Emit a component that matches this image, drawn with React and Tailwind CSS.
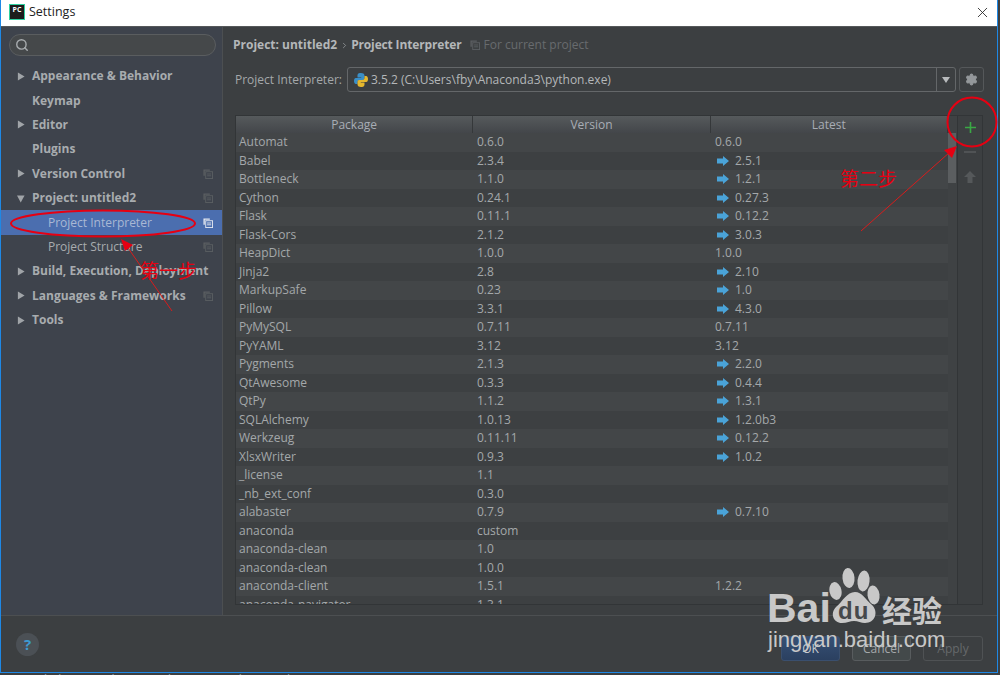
import { ChevronRight, Search, Settings, X } from 'lucide-react';

const sidebarItems = [
  { label: 'Appearance & Behavior', arrow: 'right' },
  { label: 'Keymap' },
  { label: 'Editor', arrow: 'right' },
  { label: 'Plugins' },
  { label: 'Version Control', arrow: 'right', copy: true },
  { label: 'Project: untitled2', arrow: 'down', copy: true },
  { label: 'Project Interpreter', child: true, selected: true, copy: true },
  { label: 'Project Structure', child: true, copy: true },
  { label: 'Build, Execution, Deployment', arrow: 'right' },
  { label: 'Languages & Frameworks', arrow: 'right', copy: true },
  { label: 'Tools', arrow: 'right' },
];

const packages = [
  ['Automat', '0.6.0', '0.6.0', false],
  ['Babel', '2.3.4', '2.5.1', true],
  ['Bottleneck', '1.1.0', '1.2.1', true],
  ['Cython', '0.24.1', '0.27.3', true],
  ['Flask', '0.11.1', '0.12.2', true],
  ['Flask-Cors', '2.1.2', '3.0.3', true],
  ['HeapDict', '1.0.0', '1.0.0', false],
  ['Jinja2', '2.8', '2.10', true],
  ['MarkupSafe', '0.23', '1.0', true],
  ['Pillow', '3.3.1', '4.3.0', true],
  ['PyMySQL', '0.7.11', '0.7.11', false],
  ['PyYAML', '3.12', '3.12', false],
  ['Pygments', '2.1.3', '2.2.0', true],
  ['QtAwesome', '0.3.3', '0.4.4', true],
  ['QtPy', '1.1.2', '1.3.1', true],
  ['SQLAlchemy', '1.0.13', '1.2.0b3', true],
  ['Werkzeug', '0.11.11', '0.12.2', true],
  ['XlsxWriter', '0.9.3', '1.0.2', true],
  ['_license', '1.1', '', false],
  ['_nb_ext_conf', '0.3.0', '', false],
  ['alabaster', '0.7.9', '0.7.10', true],
  ['anaconda', 'custom', '', false],
  ['anaconda-clean', '1.0', '', false],
  ['anaconda-clean', '1.0.0', '', false],
  ['anaconda-client', '1.5.1', '1.2.2', false],
  ['anaconda-navigator', '1.3.1', '', false],
];

const CopyIcon = ({ bright }) => (
  <svg width="10" height="10" viewBox="0 0 11 11" className={bright ? 'text-[#e4e8f0]' : 'text-[#5b5f62]'}>
    <path d="M0.5 0.5H7.5V2H2V7.5H0.5Z" fill="currentColor" />
    <rect x="3" y="3" width="7.5" height="7.5" fill="none" stroke="currentColor" />
    <path d="M4.5 5.5H9M4.5 7.5H9" stroke="currentColor" />
  </svg>
);

const Arrow = ({ dir }) => (
  <svg width="8" height="9" viewBox="0 0 9 9" className="text-[#a0a4a8]">
    {dir === 'down' ? <path d="M0 1H8.5L4.2 9Z" fill="currentColor" /> : <path d="M1 0L8.5 4.5L1 9Z" fill="currentColor" />}
  </svg>
);

const SidebarRow = ({ item }) => (
  <div className={`flex h-[24.4px] items-center ${item.selected ? 'bg-[#4b6eaf]' : ''}`}>
    <div className="flex w-[31px] shrink-0 justify-center pl-[13px] pr-[5px]">
      {item.arrow && <Arrow dir={item.arrow} />}
    </div>
    <span className={`flex-1 whitespace-nowrap text-[12px] ${item.child ? 'pl-[16px] font-normal' : 'font-bold'} ${item.selected ? 'text-[#a9b8d4]' : 'text-[#a8acaf]'}`}>
      {item.label}
    </span>
    <div className="flex w-[19px] shrink-0">
      {item.copy && <CopyIcon bright={item.selected} />}
    </div>
  </div>
);

const Annotations = () => (
  <svg className="absolute left-0 top-0" width="1000" height="675" viewBox="0 0 1000 675" fill="none">
    <ellipse cx="103" cy="223.5" rx="92" ry="13" stroke="#e60012" strokeWidth="2" />
    <circle cx="972" cy="122" r="24.5" stroke="#e60012" strokeWidth="2" />
    <path d="M172 311L126 245" stroke="#d81c1c" />
    <path d="M121 239L133 245L125 251Z" fill="#e60012" />
    <path d="M861 231L950 152" stroke="#d81c1c" />
    <path d="M957 146L952 158L944 150Z" fill="#e60012" />
  </svg>
);

const BaiduMark = () => (
  <div className="absolute left-[766px] top-[567px] h-[88px] w-[190px] text-[#c8c8c8]">
    <span className="absolute left-[1px] top-[11px] text-[41px] font-bold leading-[60px] [font-family:'Liberation_Sans',sans-serif]">Bai</span>
    <svg className="absolute left-[63px] top-0" width="52" height="58" viewBox="0 0 52 58" fill="currentColor">
      <ellipse cx="6.5" cy="24" rx="6" ry="9" transform="rotate(-12 6.5 24)" />
      <ellipse cx="19.5" cy="11" rx="6" ry="10" transform="rotate(-6 19.5 11)" />
      <ellipse cx="34.5" cy="14" rx="6" ry="10.5" transform="rotate(6 34.5 14)" />
      <ellipse cx="44.5" cy="28" rx="6" ry="9.5" transform="rotate(-8 44.5 28)" />
      <path d="M26 25C33 25 36 32 43 38C50 45 46 56 36 56C32 56 29 54 25 54C21 54 18 56 13 56C4 56 1 46 7 40C14 34 18 25 26 25Z" />
    </svg>
    <span className="absolute left-[72px] top-[30px] text-[24px] font-bold leading-[28px] tracking-[1px] text-[#46494b] [font-family:'Liberation_Sans',sans-serif]">du</span>
    <span className="absolute left-[116px] top-[24px] text-[30px] font-bold leading-[36px] [font-family:'Noto_Sans_CJK_SC',sans-serif]">经验</span>
    <span className="absolute left-[2px] top-[60px] whitespace-nowrap text-[22px] leading-[26px] [font-family:'Liberation_Sans',sans-serif]">jingyan.baidu.com</span>
  </div>
);

export default function App() {
  return (
    <div className="relative h-[675px] w-[1000px] overflow-hidden bg-[#3c3f41] text-[12px] text-[#a4a8aa] [font-family:'Open_Sans',sans-serif]">
      <div className="flex h-[673px] w-[998px] flex-col border-x border-b border-[#1e88e5]">
        <div className="flex h-[26px] shrink-0 items-center bg-white pb-[2px] pl-[8px] pr-[6px]">
          <div className="flex h-[16px] w-[16px] flex-col items-center border border-[#2fd0a0] bg-[#1c1c1c] text-[7px] font-bold leading-[9px] text-white">PC</div>
          <span className="ml-[4px] flex-1 text-[12.5px] text-[#222]">Settings</span>
          <X size={17} strokeWidth={1.2} className="text-[#222]" />
        </div>
        <div className="flex min-h-0 flex-1 border-t border-[#55585a]">
          <aside className="flex w-[222px] shrink-0 flex-col border-r border-[#4c4f51] bg-[#3e434c]">
            <div className="ml-[8px] mr-[6px] mt-[7px] flex h-[22px] items-center rounded-full border border-[#5a5d5f] bg-[#45484a] pl-[5px]">
              <Search size={14} strokeWidth={2.4} className="text-[#a8acaf]" />
            </div>
            <div className="mt-[8px]">
              {sidebarItems.map((item) => <SidebarRow key={item.label} item={item} />)}
            </div>
          </aside>
          <main className="flex min-w-0 flex-1 flex-col pl-[10px]">
            <div className="flex h-[36px] shrink-0 items-center">
              <span className="font-bold text-[#b4b7b9]">Project: untitled2</span>
              <ChevronRight size={9} className="ml-[3px] mr-[2px] text-[#9a9da0]" />
              <span className="font-bold tracking-[-0.15px] text-[#b4b7b9]">Project Interpreter</span>
              <span className="ml-[9px] mr-[3px] flex"><CopyIcon /></span>
              <span className="text-[#686b6e]">For current project</span>
            </div>
            <div className="mt-[4px] flex h-[25px] shrink-0 items-center pl-[2px]">
              <span className="w-[112px] shrink-0">Project Interpreter:</span>
              <div className="flex h-[25px] w-[609px] items-center rounded-[3px] border border-[#646769] bg-[#3c3f41]">
                <svg width="16" height="16" viewBox="0 0 16 16" className="ml-[5px] shrink-0">
                  <path d="M8 1C4.5 1 4.5 2.5 4.5 4V5.5H8.2V6H2.8C1.4 6 1 7.5 1 9C1 10.5 1.6 12 3 12H4.5V10C4.5 8.8 5.5 8 6.5 8H10C11 8 11.5 7.2 11.5 6.3V3.5C11.5 1.8 9.8 1 8 1Z" fill="#3a8fc7" />
                  <path d="M8 15C11.5 15 11.5 13.5 11.5 12V10.5H7.8V10H13.2C14.6 10 15 8.5 15 7C15 5.5 14.4 4 13 4H11.5V6C11.5 7.2 10.5 8 9.5 8H6C5 8 4.5 8.8 4.5 9.7V12.5C4.5 14.2 6.2 15 8 15Z" fill="#e5b72e" />
                </svg>
                <span className="ml-[2px] flex-1 text-[#b4b7b9]">3.5.2 (C:\Users\fby\Anaconda3\python.exe)</span>
                <div className="flex h-full w-[19px] items-center justify-center border-l border-[#646769]">
                  <svg width="8" height="6" viewBox="0 0 8 6"><path d="M0 0H8L4 6Z" fill="#b8bbbd" /></svg>
                </div>
              </div>
              <div className="ml-[3px] flex h-[25px] w-[25px] items-center justify-center rounded-[3px] border border-[#55585a]">
                <Settings size={13} fill="#94989b" strokeWidth={2} className="text-[#94989b]" />
              </div>
            </div>
            <div className="ml-[2px] mt-[23px] flex h-[490px] w-[748px] border border-[#323537]">
              <div className="flex min-w-0 flex-1 flex-col overflow-hidden">
                <div className="flex h-[17px] shrink-0 bg-gradient-to-b from-[#565a5c] to-[#43464a]">
                  {['Package', 'Version', 'Latest'].map((h) => (
                    <div key={h} className="flex flex-1 items-center justify-center border-r border-[#35383a] text-[#a8adb5]">{h}</div>
                  ))}
                </div>
                <div className="min-h-0 flex-1 overflow-hidden">
                  {packages.map(([name, version, latest, upgrade], i) => (
                    <div key={`${name}-${version}`} className={`flex h-[18.5px] items-center ${i % 2 === 0 ? 'bg-[#434648]' : 'bg-[#3d4042]'}`}>
                      <span className="w-[238px] shrink-0 pl-[3px]">{name}</span>
                      <span className="w-[238px] shrink-0 pl-[3px]">{version}</span>
                      <span className="flex items-center pl-[3px]">
                        {upgrade && (
                          <svg width="12" height="10" viewBox="0 0 12 10" className="ml-[2px] mr-[6px]">
                            <path d="M0 2.5H6V0L12 5L6 10V7.5H0Z" fill="#4aa3d8" />
                          </svg>
                        )}
                        {latest}
                      </span>
                    </div>
                  ))}
                </div>
              </div>
              <div className="w-[9px] shrink-0 bg-[#3f4244]">
                <div className="mt-[17px] h-[50px] w-[8px] bg-[#5b5e60]" />
              </div>
              <div className="flex w-[25px] shrink-0 flex-col items-center border-l border-[#323537]">
                <svg width="13" height="13" viewBox="0 0 13 13" className="mt-[5px]"><path d="M6.5 1V12M1 6.5H12" stroke="#3aa845" strokeWidth="1.6" /></svg>
                <div className="mt-[17px] h-[2px] w-[12px] bg-[#505355]" />
                <svg width="12" height="12" viewBox="0 0 12 12" className="mt-[18px]"><path d="M6 0L12 6H8.5V12H3.5V6H0Z" fill="#55585a" /></svg>
              </div>
            </div>
          </main>
        </div>
        <footer className="flex h-[57px] shrink-0 items-center border-t border-[#4c4f51] pl-[15px] pr-[14px]">
          <div className="flex h-[23px] w-[23px] items-center justify-center rounded-full bg-[#4b5055] text-[15px] font-bold text-[#3d9ad1]">?</div>
          <div className="ml-auto flex gap-[12px] pt-[9px]">
            <div className="flex h-[25px] w-[59px] items-center justify-center rounded-[3px] border border-[#3a4f6e] bg-gradient-to-b from-[#365075] to-[#2b4060] text-[#c8ccd0]">OK</div>
            <div className="flex h-[25px] w-[59px] items-center justify-center rounded-[3px] border border-[#585c5e] bg-[#43494a]">Cancel</div>
            <div className="flex h-[25px] w-[60px] items-center justify-center rounded-[3px] border border-[#4f5254] text-[#66696b]">Apply</div>
          </div>
        </footer>
      </div>
      <div className="h-[2px] whitespace-nowrap pl-[2px] text-[12px] leading-[14px] tracking-[0.3px] text-[#8fa3b5]">IDE and Plugin Updates: PyCharm is ready to update. (12 minutes ago)</div>
      <Annotations />
      <span className="absolute left-[140px] top-[258px] text-[19px] leading-[24px] text-[#e60012] [font-family:'Noto_Sans_CJK_SC',sans-serif]">第一步</span>
      <span className="absolute left-[840px] top-[166px] text-[19px] leading-[24px] text-[#e60012] [font-family:'Noto_Sans_CJK_SC',sans-serif]">第二步</span>
      <BaiduMark />
    </div>
  );
}
